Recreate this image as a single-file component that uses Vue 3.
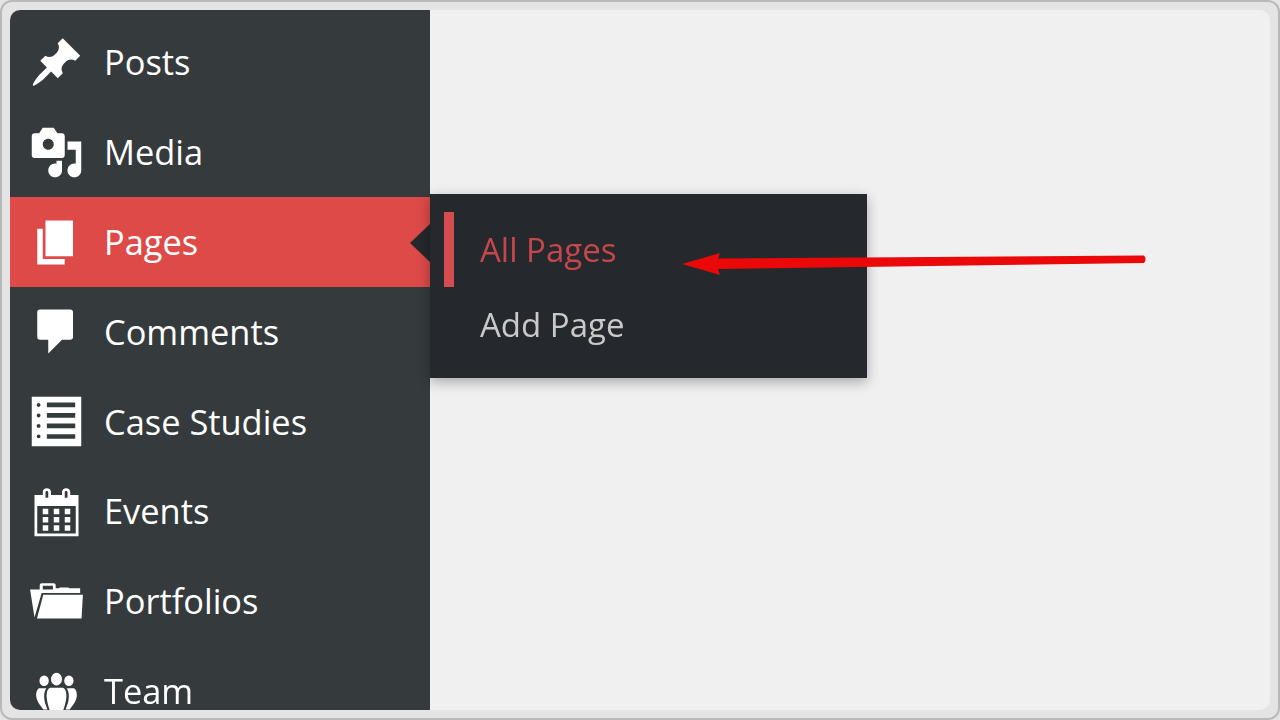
<template>
  <div class="frame">
    <div class="screen">
      <ul class="sidebar">
        <li
          v-for="item in menu"
          :key="item.label"
          class="menu-item"
          :class="{ current: item.label === 'Pages' }"
        >
          <svg class="menu-icon" viewBox="0 0 20 20" aria-hidden="true">
            <path :d="item.icon" fill-rule="evenodd" />
          </svg>
          <span class="menu-label">{{ item.label }}</span>

          <template v-if="item.label === 'Pages'">
            <i class="notch"></i>
            <ul class="flyout">
              <li class="flyout-item active">All Pages</li>
              <li class="flyout-item">Add Page</li>
            </ul>
          </template>
        </li>
      </ul>
      <div class="content"></div>

      <!-- red annotation drawn over the screenshot -->
      <svg class="arrow" viewBox="0 0 470 30" aria-hidden="true">
        <path d="M4 14 L42 3 L40 8.500 L466 5.500 Q469 9 466 13 L40 19 L42 25z" />
      </svg>
    </div>
  </div>
</template>

<script setup>
const menu = [
  {
    label: 'Posts',
    icon: 'M10.44 3.02l1.82-1.82 6.36 6.35-1.83 1.82c-1.05-.68-2.48-.57-3.41.36l-.75.75c-.92.93-1.04 2.35-.35 3.41l-1.83 1.82-2.41-2.41-2.8 2.79c-.42.42-3.38 2.71-3.8 2.29s1.86-3.39 2.28-3.81l2.79-2.79L4.1 9.36l1.83-1.82c1.05.69 2.48.57 3.4-.36l.75-.75c.93-.92 1.05-2.35.36-3.41z'
  },
  {
    label: 'Media',
    icon: 'M13 11V4c0-.55-.45-1-1-1h-1.67L9 1H5L3.67 3H2c-.55 0-1 .45-1 1v7c0 .55.45 1 1 1h10c.55 0 1-.45 1-1zM7 5c1.1 0 2 .9 2 2s-.9 2-2 2-2-.9-2-2 .9-2 2-2zM14 6h5v10.5c0 1.38-1.12 2.5-2.5 2.5S14 17.88 14 16.5s1.12-2.5 2.5-2.5c.17 0 .34.02.5.05V9h-3V6zm-4 8.05V13h2v3.5c0 1.38-1.12 2.5-2.5 2.5S7 17.88 7 16.5 8.12 14 9.5 14c.17 0 .34.02.5.05z'
  },
  {
    label: 'Pages',
    icon: 'M6 15V2h10v13H6zm-1 1h8v2H3V5h2v11z'
  },
  {
    label: 'Comments',
    icon: 'M4 2h11c.6 0 1 .4 1 1v9c0 .6-.4 1-1 1h-3l-5 5v-5H4c-.6 0-1-.4-1-1V3c0-.6.4-1 1-1z'
  },
  {
    label: 'Case Studies',
    icon: 'M1 1h18v18H1zM3.500 3.300c.4 0 .7.3.7.7s-.3.7-.7.7-.7-.3-.7-.7.3-.7.7-.7zM6.500 3.100h10.300v1.700H6.500zM3.500 7.100c.4 0 .7.3.7.7s-.3.7-.7.7-.7-.3-.7-.7.3-.7.7-.7zM6.500 6.950h10.300v1.700H6.500zM3.500 10.900c.4 0 .7.3.7.7s-.3.7-.7.7-.7-.3-.7-.7.3-.7.7-.7zM6.500 10.750h10.300v1.700H6.500zM3.500 14.700c.4 0 .7.3.7.7s-.3.7-.7.7-.7-.3-.7-.7.3-.7.7-.7zM6.500 14.600h10.300v1.700H6.500z'
  },
  {
    label: 'Events',
    icon: 'M15 4h3v15H2V4h3V3c0-.41.15-.76.44-1.06.29-.29.65-.44 1.06-.44s.77.15 1.06.44c.29.3.44.65.44 1.06v1h4V3c0-.41.15-.76.44-1.06.29-.29.65-.44 1.06-.44s.77.15 1.06.44c.29.3.44.65.44 1.06v1zM6 5h1V3c0-.14-.05-.26-.15-.36S6.64 2.5 6.5 2.5s-.26.05-.36.14c-.09.1-.14.22-.14.36v2zm7 0h1V3c0-.14-.05-.26-.15-.36s-.21-.14-.35-.14-.26.05-.36.14c-.09.1-.14.22-.14.36v2zm4 13V8H3v10h14zM7 9v2H5V9h2zm2 0h2v2H9V9zm4 2V9h2v2h-2zm-6 1v2H5v-2h2zm2 0h2v2H9v-2zm4 2v-2h2v2h-2zm-6 1v2H5v-2h2zm4 2H9v-2h2v2zm4 0h-2v-2h2v2z'
  },
  {
    label: 'Portfolios',
    icon: 'M5.200 7.500H19.600L19.100 16.200H2.900zM.4 5.600H3.900V4.100c0-.4.3-.7.7-.7H9c.4 0 .7.3.7.7v1.100h1.200c.1-.2.3-.3.5-.3h2.700c.3 0 .5.1.6.3h3.900v1.700H4.600L2 15.800zM5 4.300h3.700v1.300H5z'
  },
  {
    label: 'Team',
    icon: 'M10 3.200a2 2.300 0 1 1 0 4.600 2 2.300 0 0 1 0-4.600zM5.500 4.200a1.700 1.900 0 1 1 0 3.800 1.700 1.900 0 0 1 0-3.800zM14.500 4.200a1.700 1.900 0 1 1 0 3.800 1.700 1.900 0 0 1 0-3.800zM7.600 8.600h4.800c.9.5 1.200 1.500 1.200 3 0 2-.9 4.500-1.600 6.400H8c-.7-1.900-1.600-4.400-1.600-6.400 0-1.500.3-2.500 1.200-3zM3.600 8.800h2.700c-.5.7-.8 1.700-.8 2.900 0 1.800.6 3.300 1.200 4.800H5.200C4 15 2.600 13.300 2.600 11.300c0-1.100.3-2 1-2.500zM16.400 8.800h-2.700c.5.7.8 1.700.8 2.900 0 1.800-.6 3.300-1.200 4.800h1.500C16 15 17.400 13.300 17.400 11.300c0-1.100-.3-2-1-2.500z'
  }
]
</script>

<style>
html,
body {
  margin: 0;
  background: #e4e4e4;
}
</style>

<style scoped>
.frame {
  width: 1280px;
  height: 720px;
  box-sizing: border-box;
  padding: 8px;
  background: #e4e4e4;
  border: 2px solid #b9b9b9;
  border-radius: 12px;
  overflow: hidden;
}

.screen {
  position: relative;
  display: flex;
  height: 100%;
  background: #f0f0f0;
  border-radius: 10px;
  overflow: hidden;
}

.sidebar {
  width: 420px;
  flex-shrink: 0;
  box-sizing: border-box;
  margin: 0;
  padding: 7.5px 0 0;
  list-style: none;
  background: #353b3d;
  font-family: "Open Sans", "Noto Sans", sans-serif;
  font-size: 34.4px;
  color: #fff;
  filter: blur(0.5px);
}

.menu-item {
  position: relative;
  display: flex;
  align-items: center;
  gap: 20px;
  height: 89.85px;
  padding-left: 19px;
}

.menu-item.current {
  background: #dd4a48;
}

.menu-icon {
  width: 55px;
  height: 55px;
  flex-shrink: 0;
  fill: #fff;
}

.menu-label {
  line-height: 1;
}

.notch {
  position: absolute;
  right: 0;
  top: 27px;
  border-style: solid;
  border-width: 19px 20px 19px 0;
  border-color: transparent #25282c transparent transparent;
}

.flyout {
  position: absolute;
  left: 420px;
  top: -3px;
  z-index: 2;
  width: 437px;
  height: 184px;
  box-sizing: border-box;
  margin: 0;
  padding: 18px 0 0;
  list-style: none;
  background: #25282c;
  box-shadow: 0 4px 12px rgba(0, 0, 0, 0.3);
  font-size: 33px;
  color: #c9c9c9;
}

.flyout-item {
  position: relative;
  height: 75px;
  padding-left: 50px;
  line-height: 75px;
}

.flyout-item.active {
  color: #c4474a;
}

.flyout-item.active::before {
  content: "";
  position: absolute;
  left: 14px;
  top: 0;
  width: 10px;
  height: 100%;
  background: #d64d50;
}

.content {
  flex: 1;
}

.arrow {
  position: absolute;
  left: 668px;
  top: 240px;
  z-index: 3;
  width: 470px;
  height: 30px;
  fill: #ea0808;
  filter: blur(0.5px);
}
</style>
